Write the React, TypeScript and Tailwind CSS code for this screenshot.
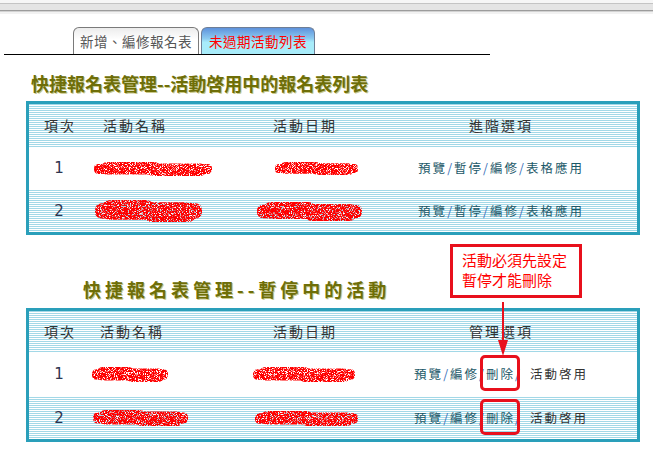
import React from 'react';

const cjk = "font-['Noto_Sans_CJK_TC','Noto_Sans_CJK_SC',sans-serif]";
const stripes =
  'bg-[linear-gradient(to_bottom,#a2d8e7_50%,#ffffff_50%)] bg-[length:100%_2px] bg-repeat';

// redacted red scribble (drawing)
const Scribble = ({ w, h, seed }: { w: number; h: number; seed: number }) => {
  const id = `scr${seed}`;
  return (
    <svg width={w} height={h} className="block">
      <defs>
        <filter id={id} x="0" y="0" width="100%" height="100%">
          <feTurbulence type="fractalNoise" baseFrequency="1.1" numOctaves="2" seed={seed} result="t" />
          <feColorMatrix
            in="t"
            type="matrix"
            values="0 0 0 0 0  0 0 0 0 0  0 0 0 0 0  0 0 0 -7 4.6"
            result="m"
          />
          <feComposite in="SourceGraphic" in2="m" operator="in" />
        </filter>
      </defs>
      <g filter={`url(#${id})`}>
        <rect x="0" y={h * 0.15} width={w} height={h * 0.7} rx={h * 0.3} fill="#ff0000" />
        <rect x={w * 0.06} y="0" width={w * 0.5} height={h * 0.9} rx={h * 0.4} fill="#ff0000" />
        <rect x={w * 0.45} y={h * 0.1} width={w * 0.5} height={h * 0.9} rx={h * 0.4} fill="#ff0000" />
      </g>
    </svg>
  );
};

const Slash = () => <span className="text-[#3a6fb8]">/</span>;

const Link = ({ children }: { children: React.ReactNode }) => (
  <span className="text-[#1b5868]">{children}</span>
);

const DeleteMark = () => (
  <span className="relative">
    <Link>刪除</Link>
    <span className="absolute left-[-6px] right-[-5px] top-[-9px] bottom-[-8px] border-[3px] border-[#e8101c] rounded-[5px]" />
  </span>
);

interface Row {
  no: string;
  name: [number, number, number];
  date: [number, number, number];
  h: string;
  striped: boolean;
}

const Table = ({
  option,
  headPad,
  headH,
  rows,
  actions,
}: {
  option: string;
  headPad: string;
  headH: string;
  rows: Row[];
  actions: React.ReactNode;
}) => (
  <div className="ml-[26px] w-[614px] border-[3px] border-[#2a9fba]">
    <div className={`grid grid-cols-[60px_156px_120px_1fr] items-center ${headH} ${stripes} text-[14px] tracking-[2px] text-[#333]`}>
      <div className="text-center pl-[2px]">項次</div>
      <div className={headPad}>活動名稱</div>
      <div className="pl-[28px]">活動日期</div>
      <div className="text-center">{option}</div>
    </div>
    {rows.map((r) => (
      <div
        key={r.no}
        className={`grid grid-cols-[60px_156px_120px_1fr] items-center ${r.h} ${r.striped ? stripes : 'bg-white'}`}
      >
        <div className="text-center text-[15px] text-[#2e3550] font-['DejaVu_Sans',sans-serif]">{r.no}</div>
        <div style={{ paddingLeft: r.name[0] }}>
          <Scribble w={r.name[1]} h={r.name[2]} seed={r.name[1]} />
        </div>
        <div style={{ paddingLeft: r.date[0] }}>
          <Scribble w={r.date[1]} h={r.date[2]} seed={r.date[1] + 7} />
        </div>
        <div className="text-center text-[12.5px] tracking-[2px]">{actions}</div>
      </div>
    ))}
  </div>
);

const headingCls =
  'h-[24px] leading-[24px] text-[18px] font-bold text-[#6e6e08] [text-shadow:1px_1px_0_#c9c98a]';

export default function App() {
  return (
    <div className={`relative w-[653px] h-[451px] bg-white overflow-hidden ${cjk}`}>
      {/* top bar */}
      <div className="h-[14px] bg-[linear-gradient(to_bottom,#f6f6f6_0px,#f6f6f6_3px,#c4c4c4_3px,#c4c4c4_4px,#e4e4e4_4px,#e4e4e4_10px,#9c9c9c_10px,#9c9c9c_11px,#d2d2d2_11px,#d2d2d2_12px,#f2f2f2_12px)]" />

      {/* tabs */}
      <div className="pt-[13px] flex pl-[73px] gap-[2px]">
        <div className="w-[126px] h-[27px] border border-b-0 border-[#7a7a7a] rounded-t-[6px] bg-[linear-gradient(to_bottom,#ececec,#ffffff_45%)] flex items-center justify-center text-[13.5px] tracking-[0.5px] text-[#555]">
          新增、編修報名表
        </div>
        <div className="w-[114px] h-[27px] border border-b-0 border-[#6e7e96] rounded-t-[6px] bg-[linear-gradient(to_bottom,#5e92dc_0%,#8ccaf0_40%,#a8ecfa_55%,#a8ecfa_100%)] flex items-center justify-center text-[13.5px] tracking-[0.5px] text-[#ff0000]">
          未過期活動列表
        </div>
      </div>
      <div className="ml-[4px] w-[486px] h-px bg-black" />

      {/* section 1 */}
      <h2 className={`mt-[16px] ml-[31px] ${headingCls}`}>快捷報名表管理--活動啓用中的報名表列表</h2>
      <div className="mt-[6px]">
        <Table
          option="進階選項"
          headPad="pl-[14px]"
          headH="h-[43px]"
          rows={[
            { no: '1', name: [5, 118, 14], date: [30, 83, 13], h: 'h-[43px]', striped: false },
            { no: '2', name: [6, 107, 22], date: [12, 105, 19], h: 'h-[42px]', striped: true },
          ]}
          actions={
            <>
              <Link>預覽</Link>
              <Slash />
              <Link>暫停</Link>
              <Slash />
              <Link>編修</Link>
              <Slash />
              <Link>表格應用</Link>
            </>
          }
        />
      </div>

      {/* section 2 */}
      <h2 className={`mt-[42px] ml-[83px] tracking-[4px] ${headingCls}`}>快捷報名表管理--暫停中的活動</h2>
      <div className="mt-[7px]">
        <Table
          option="管理選項"
          headPad="pl-[11px]"
          headH="h-[41px]"
          rows={[
            { no: '1', name: [3, 76, 15], date: [8, 102, 15], h: 'h-[45px]', striped: false },
            { no: '2', name: [4, 95, 16], date: [10, 103, 15], h: 'h-[42px]', striped: true },
          ]}
          actions={
            <>
              <Link>預覽</Link>
              <Slash />
              <Link>編修</Link>
              <Slash />
              <DeleteMark />
              <Slash />
              <span className="ml-[8px] text-[#333]">活動啓用</span>
            </>
          }
        />
      </div>

      {/* annotation callout */}
      <div className="absolute left-[450px] top-[244px] w-[132px] h-[54px] border-[3px] border-[#e8101c] bg-white pl-[9px] pt-[3px] text-[15px] leading-[20px] text-[#ff0000]">
        <div className="h-[20px]">活動必須先設定</div>
        <div className="h-[20px]">暫停才能刪除</div>
      </div>
      <svg className="absolute left-[495px] top-[302px]" width="16" height="56" viewBox="0 0 16 56">
        <line x1="8" y1="0" x2="8" y2="44" stroke="#e8101c" strokeWidth="2" />
        <polygon points="3,38 13,38 8,54" fill="#e8101c" />
      </svg>
    </div>
  );
}
